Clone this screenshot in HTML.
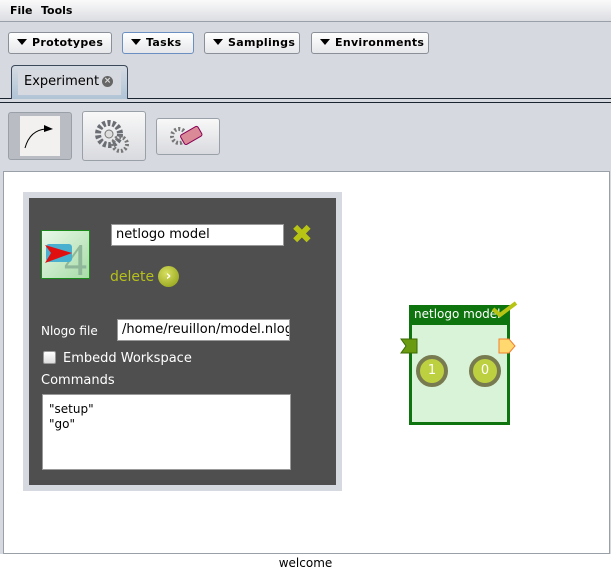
<!DOCTYPE html>
<html><head><style>
*{margin:0;padding:0;box-sizing:border-box}
body{width:611px;height:571px;background:#d6d9df;font-family:"DejaVu Sans","Liberation Sans",sans-serif;position:relative;overflow:hidden;font-size:12px}
.a{position:absolute}
.menu{left:0;top:0;width:611px;height:22px;background:linear-gradient(#fafafa,#dcdde2);border-bottom:1px solid #9aa0a8}
.menu span{font-weight:bold;font-size:11px;position:absolute;top:4px}
.btn{height:22px;top:32px;background:linear-gradient(#fff,#e6e7ea);border:1px solid #8a8f98;border-radius:3px;font-weight:bold;font-size:11px;line-height:20px;padding-left:8px;letter-spacing:.3px}
.btn:before{content:"";display:inline-block;border-left:5px solid transparent;border-right:5px solid transparent;border-top:6px solid #000;margin-right:5px;vertical-align:1px}
.tb{border:1px solid #9aa0a8;border-radius:3px;background:linear-gradient(#f8f8f8,#d9dadf)}
.lbl{color:#fff;font-size:12px}
</style></head><body>
<div class="a menu"><span style="left:10px">File</span><span style="left:41px">Tools</span></div>
<div class="a btn" style="left:8px;width:104px">Prototypes</div>
<div class="a btn" style="left:122px;width:72px;border-color:#6a8fc0">Tasks</div>
<div class="a btn" style="left:204px;width:96px">Samplings</div>
<div class="a btn" style="left:311px;width:118px">Environments</div>
<div class="a" style="left:11px;top:65px;width:117px;height:34px;border:1px solid #3a4a5a;border-bottom:none;border-radius:4px 4px 0 0;background:linear-gradient(#d6dbe2,#b0c4d6)"></div>
<div class="a" style="left:18px;top:70px;width:103px;height:25px;background:#d6d9df;font-size:13px;padding:4px 0 0 6px">Experiment</div>
<div class="a" style="left:102px;top:76px;width:11px;height:11px;border-radius:50%;background:#666;color:#ddd;font-size:9px;line-height:11px;text-align:center;font-weight:bold">×</div>
<div class="a" style="left:0;top:98px;width:11px;height:1px;background:#1a2430"></div>
<div class="a" style="left:128px;top:98px;width:483px;height:1px;background:#1a2430"></div>
<div class="a" style="left:0;top:102px;width:611px;height:1px;background:#1a2430"></div>
<div class="a tb" style="left:8px;top:112px;width:64px;height:48px;background:#b9bcc3"></div>
<div class="a" style="left:20px;top:116px;width:40px;height:40px;background:#f2f1ef"><svg width="40" height="40"><path d="M5 32 Q10 14 26 13" fill="none" stroke="#000" stroke-width="1"/><path d="M24 9 L33 13 L24 16Z" fill="#000"/></svg></div>
<div class="a tb" style="left:82px;top:111px;width:64px;height:50px"><svg width="64" height="50"><circle cx="26" cy="22" r="11" fill="none" stroke="#6a6e74" stroke-width="6" stroke-dasharray="3 2"/><circle cx="26" cy="22" r="4" fill="#ddd" stroke="#777"/><circle cx="37" cy="32" r="7" fill="none" stroke="#777" stroke-width="4" stroke-dasharray="2 2"/></svg></div>
<div class="a tb" style="left:156px;top:118px;width:64px;height:37px"><svg width="64" height="37"><circle cx="22" cy="17" r="7" fill="none" stroke="#777" stroke-width="4" stroke-dasharray="2 2"/><rect x="24" y="11" width="20" height="11" rx="2" fill="#d98a96" stroke="#805" transform="rotate(-30 34 16)"/></svg></div>
<div class="a" style="left:0;top:554px;width:611px;height:17px;background:#fff"></div>
<div class="a" style="left:3px;top:171px;width:607px;height:383px;background:#fff;border:1px solid #9aa0a8"></div>
<div class="a" style="left:23px;top:192px;width:319px;height:299px;background:#d6d9df"></div>
<div class="a" style="left:29px;top:198px;width:307px;height:287px;background:#4f4f4f"></div>
<div class="a" style="left:41px;top:230px;width:49px;height:49px;background:linear-gradient(135deg,#e8f8e8,#a8dca8);border:1px solid #1a8a1a"><svg width="47" height="47"><text x="22" y="44" font-size="46" fill="#8fb89a" font-family="Liberation Serif">4</text><rect x="4" y="13" width="26" height="18" rx="3" fill="#4ab0d0"/><path d="M3 14 L30 22 L3 32 L9 22Z" fill="#e01010"/></svg></div>
<div class="a" style="left:111px;top:224px;width:173px;height:22px;background:#fff;border:1px solid #999;font-size:13px;padding:2px 4px">netlogo model</div>
<div class="a" style="left:291px;top:222px;color:#b8c414;font-size:26px;font-weight:bold;line-height:26px">✖</div>
<div class="a" style="left:110px;top:269px;color:#b5c01a;font-size:14px">delete</div>
<div class="a" style="left:158px;top:266px;width:21px;height:21px;border-radius:50%;background:radial-gradient(circle at 40% 35%,#d8e060,#8a9a10);color:#fff;font-weight:bold;text-align:center;line-height:21px;font-size:13px">›</div>
<div class="a lbl" style="left:41px;top:324px">Nlogo file</div>
<div class="a" style="left:117px;top:319px;width:173px;height:22px;background:#fff;border:1px solid #999;font-size:13px;padding:2px 4px;overflow:hidden;white-space:nowrap">/home/reuillon/model.nlogo</div>
<div class="a" style="left:43px;top:351px;width:13px;height:13px;border:1px solid #999;border-radius:2px;background:linear-gradient(#fff,#ddd)"></div>
<div class="a lbl" style="left:63px;top:351px;font-size:13px">Embedd Workspace</div>
<div class="a lbl" style="left:41px;top:373px;font-size:13px">Commands</div>
<div class="a" style="left:42px;top:394px;width:249px;height:76px;background:#fff;border:1px solid #999;font-size:12px;padding:7px 6px;line-height:15px">"setup"<br>"go"</div>
<div class="a" style="left:409px;top:305px;width:101px;height:120px;background:#d8f3d8;border:3px solid #0e740e"></div>
<div class="a" style="left:409px;top:305px;width:101px;height:20px;background:#0e740e;color:#fff;font-size:12px;padding:2px 0 0 5px;white-space:nowrap;overflow:hidden">netlogo model</div>
<svg class="a" style="left:490px;top:300px" width="30" height="20"><path d="M3 9 L10 15 L26 3" stroke="#b8c414" stroke-width="4" fill="none"/></svg>
<svg class="a" style="left:400px;top:338px" width="20" height="16"><path d="M1 1 H17 V15 H1 L6 8Z" fill="#6a9a10" stroke="#3a6a00"/></svg>
<svg class="a" style="left:498px;top:338px" width="20" height="16"><path d="M1 1 H11 L17 8 L11 15 H1Z" fill="#ffd870" stroke="#f08030"/></svg>
<div class="a" style="left:416px;top:355px;width:32px;height:32px;border-radius:50%;background:#bcd040;border:4px solid #787a50;color:#fff;text-align:center;line-height:24px;font-size:13px">1</div>
<div class="a" style="left:469px;top:355px;width:32px;height:32px;border-radius:50%;background:#bcd040;border:4px solid #787a50;color:#fff;text-align:center;line-height:24px;font-size:13px">0</div>
<div class="a" style="left:0;top:556px;width:611px;text-align:center;font-size:12px">welcome</div>
</body></html>
